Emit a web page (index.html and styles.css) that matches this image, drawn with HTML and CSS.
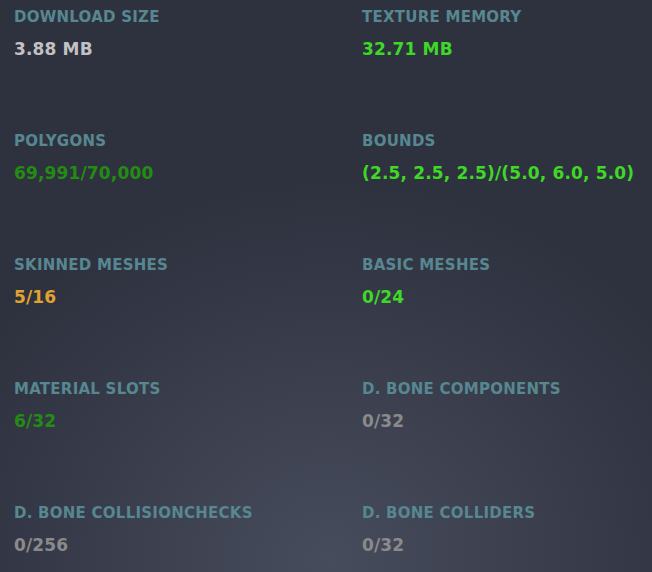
FILE: index.html
```html
<!DOCTYPE html>
<html>
<head>
<meta charset="utf-8">
<link rel="stylesheet" href="styles.css">
</head>
<body>
<div class="stats">
  <div class="stat"><div class="label">DOWNLOAD SIZE</div><div class="value v-light">3.88 MB</div></div>
  <div class="stat"><div class="label">TEXTURE MEMORY</div><div class="value v-green">32.71 MB</div></div>
  <div class="stat"><div class="label">POLYGONS</div><div class="value v-dark">69,991/70,000</div></div>
  <div class="stat"><div class="label">BOUNDS</div><div class="value v-green">(2.5, 2.5, 2.5)/(5.0, 6.0, 5.0)</div></div>
  <div class="stat"><div class="label">SKINNED MESHES</div><div class="value v-orange">5/16</div></div>
  <div class="stat"><div class="label">BASIC MESHES</div><div class="value v-green">0/24</div></div>
  <div class="stat"><div class="label">MATERIAL SLOTS</div><div class="value v-dark">6/32</div></div>
  <div class="stat"><div class="label">D. BONE COMPONENTS</div><div class="value v-gray">0/32</div></div>
  <div class="stat"><div class="label">D. BONE COLLISIONCHECKS</div><div class="value v-gray">0/256</div></div>
  <div class="stat"><div class="label">D. BONE COLLIDERS</div><div class="value v-gray">0/32</div></div>
</div>
</body>
</html>
```

FILE: styles.css
```css
html, body {
  margin: 0;
  height: 100%;
}
body {
  background: radial-gradient(ellipse 420px 380px at 330px 560px, #474c5c 0%, #3a3e4d 50%, #2e323f 100%);
  background-color: #2e323f;
  font-family: "DejaVu Sans", Verdana, sans-serif;
  font-weight: bold;
  overflow: hidden;
}
.stats {
  display: grid;
  grid-template-columns: 348px 1fr;
  grid-template-rows: repeat(4, 124px) auto;
  padding: 8px 0 0 14px;
}
.label {
  font-size: 15px;
  line-height: 18px;
  letter-spacing: 0.25px;
  color: #578790;
}
.value {
  margin-top: 13px;
  font-size: 17px;
  line-height: 20px;
  letter-spacing: 0.15px;
}
.v-light { color: #c2c2c4; }
.v-green { color: #3fd826; }
.v-dark { color: #248c12; }
.v-orange { color: #e0a42e; }
.v-gray { color: #8a8a8c; }
```
